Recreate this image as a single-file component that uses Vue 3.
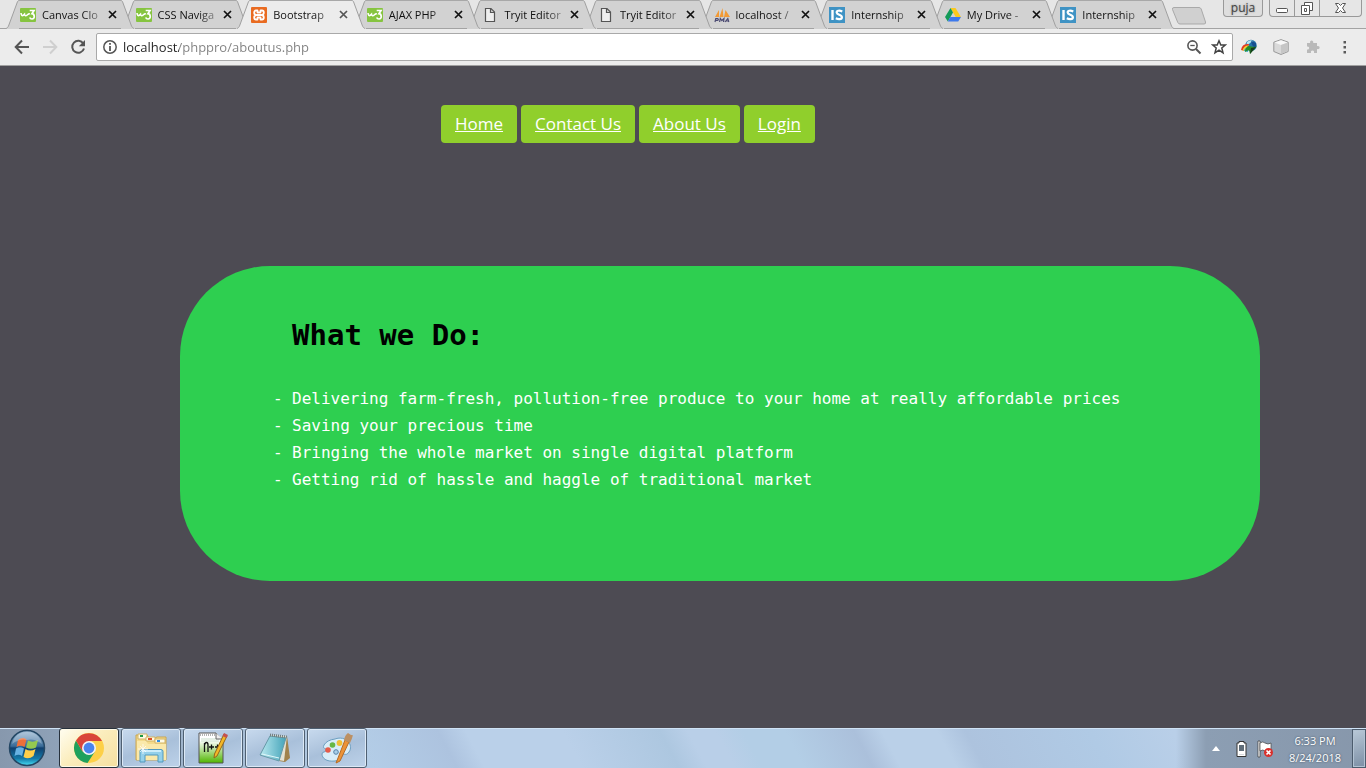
<script setup>
import { ref } from 'vue'

const tabs = [
  { icon: 'w3', title: 'Canvas Clo' },
  { icon: 'w3', title: 'CSS Naviga' },
  { icon: 'xampp', title: 'Bootstrap', active: true },
  { icon: 'w3', title: 'AJAX PHP' },
  { icon: 'page', title: 'Tryit Editor' },
  { icon: 'page', title: 'Tryit Editor' },
  { icon: 'pma', title: 'localhost /' },
  { icon: 'is', title: 'Internship' },
  { icon: 'drive', title: 'My Drive -' },
  { icon: 'is', title: 'Internship' },
]
const address = ref('localhost/phppro/aboutus.php')
const links = ['Home', 'Contact Us', 'About Us', 'Login']
const items = [
  'Delivering farm-fresh, pollution-free produce to your home at really affordable prices',
  'Saving your precious time',
  'Bringing the whole market on single digital platform',
  'Getting rid of hassle and haggle of traditional market',
]
</script>

<template>
  <div class="screen">
    <header class="browser">
      <div class="tabstrip">
        <div class="tabs" role="tablist">
          <div v-for="(tab, i) in tabs" :key="i" class="tab" :class="['tab-' + i, { active: tab.active }]" role="tab" :aria-selected="!!tab.active">
            <div class="shape">
              <svg class="edge" viewBox="0 0 13 29" preserveAspectRatio="none">
                <path class="fill" d="M0 29V28.500C1.500 28 2 27 2.500 26L11 3C11.500 1.500 12 .500 13 .500V29Z" />
                <path class="line" d="M0 28.500C1.500 28 2 27 2.500 26L11 3C11.500 1.500 12 .500 13 .500" />
              </svg>
              <div class="middle"></div>
              <svg class="edge" viewBox="0 0 13 29" preserveAspectRatio="none">
                <path class="fill" d="M0 .500C1 .500 1.500 1.500 2 3L10.500 26C11 27 11.500 28 13 28.500V29H0Z" />
                <path class="line" d="M0 .500C1 .500 1.500 1.500 2 3L10.500 26C11 27 11.500 28 13 28.500" />
              </svg>
            </div>
            <div class="tabbody">
              <svg v-if="tab.icon === 'w3'" class="fav" viewBox="0 0 16 16">
                <rect y="1" width="16" height="14" rx="1" fill="#86c440" />
                <path d="M1 6C1.300 8.500 2.200 9 3.300 8.300L4.500 7.200C4.800 9.300 6 9 7.200 8C8 7.500 8.300 6.500 9.800 7" fill="none" stroke="#fff" stroke-width="1.600" />
                <path d="M9.700 3.500H14L11.900 6.700C15 7 15 12 12 12C10.800 12 10 11.300 9.700 10.500" fill="none" stroke="#fff" stroke-width="1.700" />
              </svg>
              <svg v-else-if="tab.icon === 'xampp'" class="fav" viewBox="0 0 16 16">
                <rect width="16" height="16" rx="1" fill="#e96b21" />
                <path d="M6 8H10M5 3.500H6.500V5.500H9.500V3.500H11Q12.800 3.500 12.800 5.500Q12.800 8 10.500 8Q12.800 8 12.800 10.500Q12.800 12.500 11 12.500H9.500V10.500H6.500V12.500H5Q3.200 12.500 3.200 10.500Q3.200 8 5.500 8Q3.200 8 3.200 5.500Q3.200 3.500 5 3.500Z" fill="none" stroke="#fff" stroke-width="1.800" stroke-linejoin="round" />
              </svg>
              <svg v-else-if="tab.icon === 'page'" class="fav" viewBox="0 0 16 16">
                <path d="M3.500 1.500H9L12.500 5V14.500H3.500ZM8.500 1.500V5.500H12.500" fill="#eee" stroke="#555" stroke-width="1.200" />
              </svg>
              <svg v-else-if="tab.icon === 'pma'" class="fav" viewBox="0 0 16 16">
                <path d="M1 10L5 3V10ZM5.500 10L8.500 1L9.500 10ZM10 10L11.500 3L16 10Z" fill="#f29a36" />
                <path d="M1 15L1.800 11.500H3.500Q5 12 3.800 13.400H1.600M5.600 15L6.300 11.500L7.800 13.500L10 11.500L9.500 15M11 15L13.800 11.500L14.800 15M12 14H14.500" fill="none" stroke="#4c4b73" stroke-width="1.200" />
              </svg>
              <svg v-else-if="tab.icon === 'is'" class="fav" viewBox="0 0 16 16">
                <rect width="16" height="16" fill="#3f93c4" />
                <path d="M3.500 3V13" stroke="#fff" stroke-width="2.400" />
                <path d="M13.300 4.500C10.500 3.200 7.500 3.500 7.700 5.600C8 8.100 12.900 7.300 12.900 10.200C12.900 12.800 9 12.500 6.800 11.300" fill="none" stroke="#fff" stroke-width="2.200" />
              </svg>
              <svg v-else class="fav" viewBox="0 0 16 16">
                <path d="M5.500 1H10.500L16 10H10.700Z" fill="#fbc91d" />
                <path d="M5.500 1L8 5.400L2.800 14.500L0 10Z" fill="#149b59" />
                <path d="M5.300 10H16L13.200 14.500H2.800Z" fill="#3d79ec" />
              </svg>
              <span class="title">{{ tab.title }}</span>
              <button class="close" aria-label="Close tab">
                <svg viewBox="0 0 9 9"><path d="M1 1L8 8M8 1L1 8" /></svg>
              </button>
            </div>
          </div>
        </div>
        <button class="newtab" aria-label="New tab">
          <svg viewBox="0 0 36 18"><path d="M3 .500H28Q29.500 .500 30.200 2L34.500 15Q35 17 33 17H9Q7.500 17 6.800 15.500L1.500 2.500Q1 .500 3 .500Z" fill="#d0d0d0" stroke="#a9a9a9" /></svg>
        </button>
        <div class="controls">
          <button class="profile">puja</button>
          <div class="winbtns">
            <button aria-label="Minimize"><svg width="14" height="16" viewBox="0 0 14 16"><rect x="1.500" y="8.500" width="11" height="4" rx="1" fill="#fff" stroke="#555" /></svg></button>
            <button aria-label="Restore"><svg width="14" height="16" viewBox="0 0 14 16"><path d="M4.500 2.500H12.500V10.500H4.500Z" fill="#fff" stroke="#555" /><path d="M1.500 5.500H9.500V14.500H1.500Z" fill="#fff" stroke="#555" /><path d="M4.500 8.500H6.500V11.500H4.500Z" fill="none" stroke="#555" /></svg></button>
            <button class="wide" aria-label="Close"><svg width="14" height="16" viewBox="0 0 14 16"><path d="M1.500 3.500H4.500L6.500 5.500L8.500 3.500H11.500L8.500 8L11.500 12.500H8.500L6.500 10.500L4.500 12.500H1.500L4.500 8Z" fill="#fff" stroke="#555" /></svg></button>
          </div>
        </div>
      </div>
      <div class="toolbar">
        <button class="tool" aria-label="Back"><svg viewBox="0 0 16 16"><path d="M15 8H2M8 1.500L1.700 8L8 14.500" fill="none" stroke="#555" stroke-width="2" /></svg></button>
        <button class="tool" aria-label="Forward"><svg viewBox="0 0 16 16"><path d="M1 8H14M8 1.500L14.300 8L8 14.500" fill="none" stroke="#cfcfcf" stroke-width="2" /></svg></button>
        <button class="tool" aria-label="Reload"><svg viewBox="0 0 16 16"><path d="M13.300 4.500A6 6 0 1 0 14 9.500" fill="none" stroke="#555" stroke-width="2" /><path d="M15 1V7.200H8.800Z" fill="#555" /></svg></button>
        <div class="omnibox">
          <svg class="info" viewBox="0 0 16 16"><circle cx="8" cy="8" r="6.200" fill="none" stroke="#555" stroke-width="1.500" /><path d="M8 7V12M8 4V5.800" stroke="#555" stroke-width="1.800" /></svg>
          <input v-model="address" type="text" aria-label="Address" spellcheck="false" />
          <button class="tool" aria-label="Zoom"><svg viewBox="0 0 16 16"><circle cx="6.500" cy="6.500" r="4.600" fill="none" stroke="#555" stroke-width="1.600" /><path d="M10 10L14.500 14.500" stroke="#555" stroke-width="2" /><path d="M4.300 6.500H8.700" stroke="#555" stroke-width="1.300" /></svg></button>
          <button class="tool" aria-label="Bookmark"><svg viewBox="0 0 16 16"><path d="M8 1.800L9.800 6H14.300L10.800 9L12 13.800L8 11.200L4 13.800L5.200 9L1.700 6H6.200Z" fill="none" stroke="#444" stroke-width="1.500" /></svg></button>
        </div>
        <div class="extensions">
          <button class="tool" aria-label="Download manager"><svg viewBox="0 0 16 16"><circle cx="10" cy="6.500" r="5.700" fill="#2374a8" /><path d="M6 3Q9 0 12 2L9 4L5 8Z" fill="#b5e4ef" /><path d="M10 2L15 4V9Q11 8 10 2Z" fill="#155092" /><path d="M0 11Q1 4 8 5L7 8Q4 8 4 12Z" fill="#e23b23" /><path d="M1.500 11.500Q3 6 8 6.500L7 9Q5 9 5 12Z" fill="#f3cf2c" /><path d="M3 12Q4 8 7 8.500L7 13Z" fill="#30a8d4" /><path d="M7 7L14 8L16 7L9 15L8 11L4 13Q4 9 7 7Z" fill="#258c29" /><path d="M10 9L15 8L9 15Z" fill="#173c1a" /></svg></button>
          <button class="tool" aria-label="Box"><svg viewBox="0 0 16 16"><path d="M8 .600L15.200 3.200V12.500L8 15.500L.800 12.500V3.200Z" fill="#d9d9d9" stroke="#999" /><path d="M1.500 3.500L8 1.300L14.500 3.500L8 6Z" fill="#f7f7f7" /><path d="M8 6L14.600 3.700V12L8 15Z" fill="#c6c6c6" /></svg></button>
          <button class="tool" aria-label="Extension"><svg viewBox="0 0 16 16"><path d="M2 4H5.200C4 .500 9.200 .500 8.200 4H12V7.200C15.500 6 15.500 11 12 10V14H9C10 10.800 5 10.800 6 14H2V10.500C5 11 5 7 2 7.500Z" fill="#b9b9b9" /></svg></button>
          <button class="tool" aria-label="Menu"><svg viewBox="0 0 16 16"><path d="M6.500 2H9V4.500H6.500ZM6.500 7H9V9.500H6.500ZM6.500 12H9V14.500H6.500Z" fill="#5a5a5a" /></svg></button>
        </div>
      </div>
    </header>

    <main class="page">
      <nav class="menu">
        <a v-for="l in links" :key="l" href="#">{{ l }}</a>
      </nav>
      <section class="card">
        <h1>What we Do:</h1>
        <ul>
          <li v-for="t in items" :key="t">{{ t }}</li>
        </ul>
      </section>
    </main>

    <footer class="taskbar">
      <button class="start" aria-label="Start">
        <svg viewBox="0 0 38 38">
          <defs>
            <linearGradient id="orb" x1="0" y1="0" x2="0" y2="1"><stop offset="0" stop-color="#9cb9d2" /><stop offset=".450" stop-color="#386b98" /><stop offset=".500" stop-color="#10406f" /><stop offset=".800" stop-color="#1379a8" /><stop offset="1" stop-color="#48e0f5" /></linearGradient>
          </defs>
          <circle cx="19" cy="19" r="17.500" fill="url(#orb)" stroke="#244764" stroke-width="1.500" />
          <path d="M10 11Q14.500 7.500 18.500 10.500L16.500 18Q12.500 15.500 8.500 18Z" fill="#ed7039" />
          <path d="M20 11.500Q24.500 14 30 11L28 18.500Q23 21 18 18.500Z" fill="#94c950" />
          <path d="M8 19.500Q12 17 16 19.500L14 27Q10.500 24.500 6.500 27Z" fill="#68b2e3" />
          <path d="M17.500 20Q22 23 27.500 20L25.500 27Q20.500 31 15.500 28Z" fill="#ffcf4a" />
          <path d="M4 15Q7 3 19 3Q31 3 34 15Q26 9 19 11Q12 9 4 15Z" fill="#fff" opacity=".250" />
        </svg>
      </button>
      <div class="apps">
        <button class="app current" aria-label="Chrome">
          <svg viewBox="0 0 32 32"><circle cx="16" cy="16" r="15" fill="#fdd048" /><path d="M3 8.500A15 15 0 0 0 14.500 31L22 19.500L16 16L9.500 19.500Z" fill="#1fa15d" /><path d="M3 8.500L9.500 19.500L16 9H29A15 15 0 0 0 3 8.500Z" fill="#d9453a" /><circle cx="16" cy="16" r="7" fill="#f4f4f4" /><circle cx="16" cy="16" r="5.400" fill="#4a84ed" /></svg>
        </button>
        <button class="app" aria-label="File explorer">
          <svg viewBox="0 0 32 32"><path d="M1 3H12L14 6H20L22 5H31V28H1Z" fill="#f4db8c" stroke="#c8a552" /><path d="M3 2H12V7H3Z" fill="#fffbe6" stroke="#d0b366" /><path d="M5 3H8V5H5Z" fill="#1b9944" /><path d="M11 5H20V9H11Z" fill="#fffbe6" stroke="#d0b366" /><path d="M13 6H17V8H13Z" fill="#dd4d22" /><path d="M20 7H30V11H20Z" fill="#fffbe6" stroke="#d0b366" /><path d="M22 8H25V10H22Z" fill="#2e8de0" /><path d="M2 9H11L13 12H31V28H2Z" fill="#fae9ab" /><path d="M5 30V19Q5 17.500 7 17.500H26Q28 17.500 28 19.500V30H23V23H10V30Z" fill="#94d0ea" stroke="#5199be" /><path d="M7 19H26" stroke="#e1f7ff" stroke-width="1.500" /><path d="M8 12V22M3 17H13M5 14L11 20M11 14L5 20" stroke="#fff" stroke-width=".700" /></svg>
        </button>
        <button class="app" aria-label="Notepad++">
          <svg viewBox="0 0 32 32"><defs><linearGradient id="np" x1="0" y1="0" x2="0" y2="1"><stop offset=".250" stop-color="#fff" /><stop offset="1" stop-color="#4fb500" /></linearGradient></defs><path d="M2 1H19L26 8V31H2Z" fill="url(#np)" stroke="#555" /><path d="M3 3H19" stroke="#666" stroke-dasharray="1 1" /><path d="M4 7H22M4 9H22" stroke="#c9dfca" /><path d="M19 1V7H26" fill="#eee" stroke="#666" /><path d="M7.500 20V11M7.500 13Q8 10.500 9.500 10.500Q11 10.500 11 13V20M12 15H17M14.500 12.500V17.500M18 15H23M20.500 12.500V17.500" fill="none" stroke="#111" stroke-width="1.300" /><path d="M27 2L30 4L20 24L17 26L17.500 22Z" fill="#f3b727" stroke="#94661b" /><path d="M27 1L31 3L29.500 6L25.500 4Z" fill="#c45150" /></svg>
        </button>
        <button class="app" aria-label="Notepad">
          <svg viewBox="0 0 32 32"><path d="M28 4L31 26L26 30L20 29Z" fill="#a1824b" /><path d="M12 3L28 4L25 29L19 28Z" fill="#e4e2d3" /><defs><linearGradient id="pad"><stop stop-color="#b9e9f0" /><stop offset="1" stop-color="#45a4b9" /></linearGradient></defs><path d="M11 4L27 6L20 29L1 23Z" fill="url(#pad)" stroke="#6799a8" /><path d="M11 3L28 5" stroke="#707c7d" stroke-width="3" stroke-dasharray="1 1" /><path d="M3 22L20 26" stroke="#dff7fa" /></svg>
        </button>
        <button class="app" aria-label="Paint">
          <svg viewBox="0 0 32 32"><path d="M14 7C25 3 33 13 28 20C25 25 22 20 19 23C17 25 21 28 14 29C5 30 1 26 1 22C1 19 5 21 5 18C5 15 1 18 3 13Q6 8 14 7Z" fill="#d8edf8" stroke="#6d9fc1" /><circle cx="7" cy="18" r="2.800" fill="#e65c49" /><circle cx="11.500" cy="13" r="2.800" fill="#67b743" /><circle cx="18.500" cy="11" r="2.900" fill="#f1bf36" /><circle cx="15" cy="20" r="2.300" fill="#a9d0e9" stroke="#5682a7" /><path d="M24 8L28 10L19 29L15 31L17 26Z" fill="#ec9338" stroke="#b56c25" /><path d="M27 1Q31 4 32 3Q31 7 29 11L23 8Q24 3 27 1Z" fill="#bc9063" /></svg>
        </button>
      </div>
      <div class="tray">
        <svg class="up" viewBox="0 0 8 5"><path d="M0 5L4 0L8 5Z" fill="#fff" /></svg>
        <svg class="trayicon" viewBox="0 0 16 18"><path d="M6 1.500H11V3H13V16.500H4V3H6Z" fill="#fff" stroke="#333" /><path d="M6 5H11V14.500H6Z" fill="#5f6d79" /><path d="M6 11H11V14.500H6Z" fill="#fff" /></svg>
        <svg class="trayicon" viewBox="0 0 16 18"><path d="M1 1H3V17H1Z" fill="#fff" stroke="#333" stroke-width=".700" /><path d="M3 3Q6 1 8 3Q11 5 14 3V11Q10 13 8 11Q6 9 3 11Z" fill="#fff" stroke="#444" stroke-width=".700" /><circle cx="11.500" cy="12.500" r="4.500" fill="#d9302c" /><path d="M9.500 10.500L13.500 14.500M13.500 10.500L9.500 14.500" stroke="#fff" stroke-width="1.700" /></svg>
        <div class="clock"><span>6:33 PM</span><span>8/24/2018</span></div>
        <button class="desktop" aria-label="Show desktop"></button>
      </div>
    </footer>
  </div>
</template>

<style>
body { margin: 0; }
</style>

<style scoped>
* { box-sizing: border-box; }
button { border: 0; padding: 0; background: none; font: inherit; }
svg { display: block; }
.screen { min-height: 100vh; display: flex; flex-direction: column; background: #4d4b53; font-family: "Open Sans", "Noto Sans", sans-serif; }
.browser { background: #e6e6e6; }
.tabstrip { display: flex; height: 29px; padding-left: 6px; border-bottom: 1px solid #a3a3a3; }
.tabs { flex: 1; display: flex; min-width: 0; height: 29px; padding-right: 9px; }
.tab { flex: 1 1 0; min-width: 0; position: relative; display: flex; }
.tab-0 { z-index: 10; } .tab-1 { z-index: 9; } .tab-2 { z-index: 11; } .tab-3 { z-index: 7; } .tab-4 { z-index: 6; }
.tab-5 { z-index: 5; } .tab-6 { z-index: 4; } .tab-7 { z-index: 3; } .tab-8 { z-index: 2; } .tab-9 { z-index: 1; }
.shape { position: absolute; left: 0; top: 0; width: calc(100% + 12px); height: 29px; display: flex; }
.edge { width: 13px; height: 29px; flex: none; }
.fill { fill: #d2d2d2; }
.line { fill: none; stroke: #a0a0a0; }
.middle { flex: 1; background: #d2d2d2; border-top: 1px solid #a8a8a8; border-bottom: 1px solid #a3a3a3; }
.active .fill { fill: #ececec; }
.active .middle { background: #ececec; border-bottom-color: #ececec; }
.tabbody { position: relative; flex: 1; min-width: 0; display: flex; align-items: center; padding-left: 14px; height: 29px; }
.fav { width: 16px; height: 16px; flex: none; }
.title { flex: 1; min-width: 0; margin-left: 6px; overflow: hidden; white-space: nowrap; font-size: 11px; line-height: 18px; color: #111; -webkit-mask-image: linear-gradient(90deg, #000 66%, transparent 110%); mask-image: linear-gradient(90deg, #000 66%, transparent 110%); }
.close { width: 9px; height: 9px; margin: 0 5px 0 4px; flex: none; }
.close path { stroke: #111; stroke-width: 1.700; }
.active .close path { stroke: #555; }
.newtab { width: 36px; height: 18px; margin-top: 7px; }
.controls { display: flex; gap: 6px; margin: 0 4px 0 16px; height: 17px; font-size: 12px; }
.profile { width: 40px; line-height: 14px; border: 1px solid #999; border-top: 0; border-radius: 0 0 4px 4px; color: #444; background: #dedede; text-shadow: 0 0 2px #888; }
.winbtns { display: flex; border: 1px solid #999; border-top: 0; border-radius: 0 0 4px 4px; }
.winbtns button { width: 25px; display: flex; justify-content: center; border-right: 1px solid #999; }
.winbtns .wide { width: 41px; border: 0; }
.toolbar { height: 37px; background: #ececec; border-bottom: 1px solid #a0a0a0; display: flex; align-items: center; gap: 12px; padding: 0 13px 0 14px; }
.tool { width: 16px; height: 16px; flex: none; }
.omnibox { flex: 1; min-width: 0; height: 28px; margin-left: -2px; background: #fff; border: 1px solid #a9a9a9; border-radius: 2px; display: flex; align-items: center; padding: 0 5px; gap: 9px; }
.info { width: 16px; height: 16px; flex: none; }
.omnibox input { flex: 1; min-width: 0; height: 22px; margin-left: -4px; border: 0; padding: 0; outline: none; font-family: inherit; font-size: 13px; color: transparent; background: linear-gradient(90deg, #222 56px, #808080 56px); -webkit-background-clip: text; background-clip: text; }
.extensions { display: flex; gap: 16px; margin-left: -4px; }
.page { flex: 1; padding: 39px 106px 40px 180px; }
.menu { display: flex; gap: 4px; margin-left: 261px; }
.menu a { padding: 0 14px; border-radius: 4px; background: #90cf2c; color: #fff; font-size: 17px; line-height: 38px; white-space: nowrap; }
.card { margin-top: 123px; padding: 48px 24px 88px 93px; background: #2ecf50; border-radius: 90px; font-family: "DejaVu Sans Mono", monospace; color: #fff; }
h1 { margin: 0 0 29px 19px; font-size: 29px; line-height: 42px; color: #000; }
ul { list-style: none; margin: 0; padding: 0; }
li { display: flex; font-size: 16px; line-height: 27px; }
li::before { content: "-"; width: 19px; flex: none; }
.taskbar { height: 40px; border-top: 1px solid #cfe3f6; display: flex; align-items: stretch; background: linear-gradient(90deg, #8798ad 0, #8fa2b8 60px, #b3cbe4 330px, transparent 380px, transparent calc(100% - 190px), #8c9eb3 calc(100% - 160px), #8797ab 100%), linear-gradient(62deg, #b3cde7 0, #b3cde7 27%, #adc3df 33%, #bad0e9 35%, #bad0e9 42%, #adc7e0 49%, #b9cfe8 51%, #b9cfe8 53%, #b3cee6 55%, #b3cee6 58%, #abc0db 63%, #bad0e8 65%, #bad0e8 69%, #adc3de 71%, #b0cae5 80%, #b9cfe8 86%); }
.start { width: 38px; height: 38px; margin: 0 12px 0 8px; }
.apps { flex: 1; display: flex; gap: 2px; margin-left: 1px; }
.app { width: 60px; height: 40px; margin-top: -1px; display: flex; align-items: center; justify-content: center; border: 1px solid #4f6072; border-radius: 3px; box-shadow: inset 0 0 0 1px #dce9f6; background: linear-gradient(160deg, #c8daee, #a9c0da 50%, #bdd2e9); }
.app.current { border-color: #27313c; background: linear-gradient(140deg, #fffdf0, #fbedbd 45%, #f5dfa0); box-shadow: inset 0 0 0 1px #fffbe7; }
.app svg { width: 32px; height: 32px; }
.tray { display: flex; align-items: center; color: #fff; }
.up { width: 8px; height: 5px; margin-right: 13px; }
.trayicon { width: 16px; height: 18px; margin-right: 8px; }
.clock { display: flex; flex-direction: column; align-items: center; width: 68px; margin-right: 3px; font-size: 11px; line-height: 17px; text-shadow: 0 0 2px #345; }
.desktop { width: 14px; align-self: stretch; border: 1px solid #4c5c6d; background: linear-gradient(160deg, #b9c8d7, #7c8fa5); box-shadow: inset 0 0 0 1px #b2c2d2; }
</style>
